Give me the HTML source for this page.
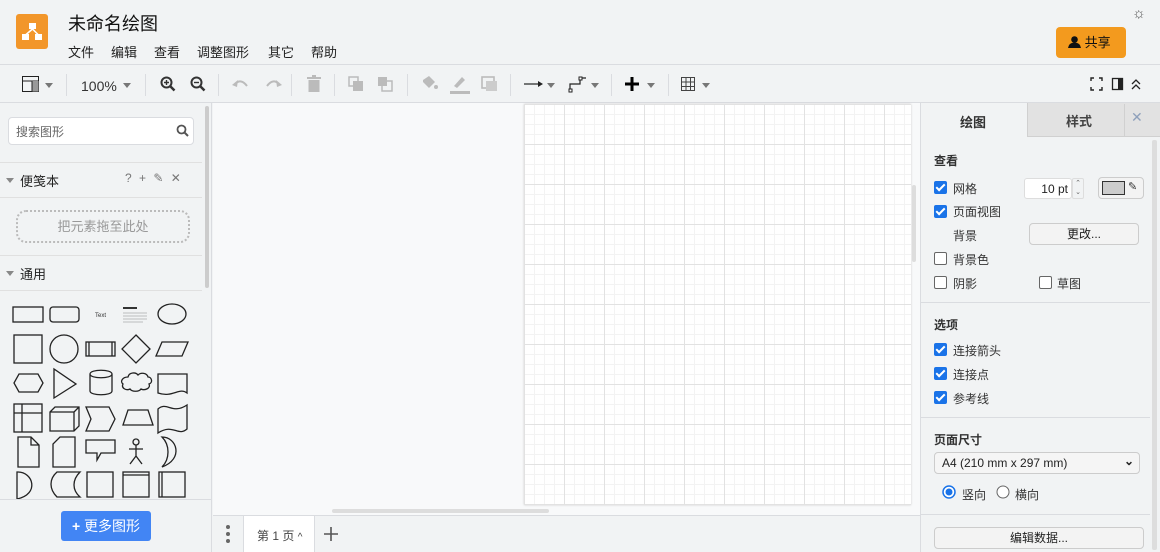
<!DOCTYPE html>
<html><head><meta charset="utf-8"><style>
*{box-sizing:border-box;margin:0;padding:0}
body{width:1160px;height:552px;overflow:hidden;background:#f1f3f4;font-family:"Liberation Sans","Noto Sans CJK SC",sans-serif;color:#222;position:relative;font-size:13px}
.abs{position:absolute}
.menu span{position:absolute;top:0;font-size:13px;white-space:nowrap}
.tb{top:64px;left:0;width:1160px;height:39px;border-top:1px solid #dadce0;border-bottom:1px solid #dadce0;background:#f1f3f4}
.sep{position:absolute;top:9px;width:1px;height:22px;background:#dadce0}
.caret{display:inline-block;border-left:4px solid transparent;border-right:4px solid transparent;border-top:5px solid #777}
.cb{position:absolute;width:13px;height:13px;border-radius:2px}
.cb.on{background:#1a73e8}
.cb.on:after{content:"";position:absolute;left:4px;top:1px;width:3px;height:7px;border:solid #fff;border-width:0 2px 2px 0;transform:rotate(45deg)}
.cb.off{border:1px solid #666;background:#fff}
.lbl{position:absolute;font-size:12px;color:#333}
.btn{position:absolute;border:1px solid #ccc;border-radius:4px;background:#f3f3f3;font-size:12px;text-align:center}
</style></head><body>
<!-- header -->
<div class="abs" style="left:16px;top:14px;width:32px;height:35px;background:#f2962a;border-radius:3px"></div>
<svg class="abs" style="left:16px;top:14px" width="32" height="35"><g fill="#fff"><rect x="13" y="9" width="7" height="6"/><rect x="6" y="20" width="7" height="6"/><rect x="19" y="20" width="7" height="6"/></g><path d="M16.5 15 L9.5 21 M16.5 15 L22.5 21" stroke="#fff" stroke-width="1.5"/></svg>
<div class="abs" style="left:68px;top:10px;font-size:18px;color:#111">未命名绘图</div>
<div class="abs menu" style="left:0;top:42px"><span style="left:68px">文件</span><span style="left:111px">编辑</span><span style="left:154px">查看</span><span style="left:197px">调整图形</span><span style="left:268px">其它</span><span style="left:311px">帮助</span></div>
<div class="abs" style="left:1132px;top:5px;font-size:15px;color:#555">☼</div>
<div class="abs" style="left:1056px;top:27px;width:70px;height:31px;background:#f39a1e;border-radius:4px;color:#111;font-size:13px;line-height:31px;padding-left:12px">
<svg width="13" height="12" style="vertical-align:-1px"><circle cx="6.5" cy="3.5" r="3.3" fill="#111"/><path d="M0 12 Q1 6.5 6.5 6.5 Q12 6.5 13 12Z" fill="#111"/></svg> 共享</div>
<!-- toolbar -->
<div class="abs tb">
<svg class="abs" style="left:22px;top:11px" width="18" height="16"><rect x=".5" y=".5" width="16" height="15" fill="none" stroke="#222"/><line x1="0" y1="5" x2="17" y2="5" stroke="#222"/><rect x="10" y="5" width="6.5" height="10.5" fill="#999"/><line x1="10" y1="5" x2="10" y2="16" stroke="#222"/></svg>
<span class="caret abs" style="left:45px;top:18px"></span>
<div class="sep" style="left:66px"></div>
<div class="abs" style="left:81px;top:13px;font-size:14px;color:#333">100%</div><span class="caret abs" style="left:123px;top:18px"></span>
<div class="sep" style="left:145px"></div>
<svg class="abs" style="left:160px;top:11px" width="16" height="16"><circle cx="6.5" cy="6.5" r="5" fill="none" stroke="#333" stroke-width="2"/><path d="M10 10 L14.5 14.5" stroke="#333" stroke-width="2.5"/><path d="M4 6.5h5M6.5 4v5" stroke="#333" stroke-width="1.4"/></svg>
<svg class="abs" style="left:190px;top:11px" width="16" height="16"><circle cx="6.5" cy="6.5" r="5" fill="none" stroke="#333" stroke-width="2"/><path d="M10 10 L14.5 14.5" stroke="#333" stroke-width="2.5"/><path d="M4 6.5h5" stroke="#333" stroke-width="1.4"/></svg>
<div class="sep" style="left:218px"></div>
<svg class="abs" style="left:232px;top:13px" width="50" height="12"><path d="M3 6 Q9 0 15 8" stroke="#bbb" stroke-width="2" fill="none"/><path d="M0 7 L6 2 L5 9Z" fill="#bbb"/><path d="M47 6 Q41 0 35 8" stroke="#bbb" stroke-width="2" fill="none"/><path d="M50 7 L44 2 L45 9Z" fill="#bbb"/></svg>
<div class="sep" style="left:291px"></div>
<svg class="abs" style="left:307px;top:10px" width="14" height="17"><rect x="0" y="2" width="14" height="2" fill="#bbb"/><rect x="5" y="0" width="4" height="2" fill="#bbb"/><rect x="1.5" y="5" width="11" height="12" fill="#bbb"/></svg>
<div class="sep" style="left:334px"></div>
<svg class="abs" style="left:348px;top:11px" width="50" height="16"><rect x="1" y="1" width="9" height="9" fill="none" stroke="#bbb" stroke-width="1.5"/><rect x="5" y="5" width="10" height="10" fill="#bbb"/><rect x="30" y="1" width="9" height="9" fill="#bbb"/><rect x="34" y="5" width="10" height="10" fill="none" stroke="#bbb" stroke-width="1.5"/></svg>
<div class="sep" style="left:407px"></div>
<svg class="abs" style="left:420px;top:9px" width="80" height="20"><path d="M3 6 L9 2 L15 8 L9 14 L3 8Z" fill="#bbb"/><circle cx="16" cy="13" r="2" fill="#bbb"/><path d="M34 12 L42 3 L45 6 L37 14Z" fill="#bbb"/><rect x="30" y="17" width="20" height="3" fill="#bbb"/><rect x="62" y="3" width="12" height="11" fill="none" stroke="#bbb" stroke-width="1.6"/><rect x="66" y="7" width="11" height="10" fill="#ccc"/></svg>
<div class="sep" style="left:510px"></div>
<svg class="abs" style="left:524px;top:14px" width="20" height="10"><path d="M0 5h16" stroke="#222" stroke-width="1.2"/><path d="M14 2 L19 5 L14 8Z" fill="#222"/></svg><span class="caret abs" style="left:547px;top:18px"></span>
<svg class="abs" style="left:568px;top:11px" width="20" height="17"><path d="M2 14 V8 H12 V2 H18" stroke="#222" fill="none" stroke-width="1.2"/><rect x="1" y="13" width="3" height="3" fill="#fff" stroke="#222"/><rect x="11" y="1" width="3" height="3" fill="#fff" stroke="#222"/></svg><span class="caret abs" style="left:591px;top:18px"></span>
<div class="sep" style="left:611px"></div>
<svg class="abs" style="left:625px;top:12px" width="14" height="14"><path d="M7 0v14M0 7h14" stroke="#000" stroke-width="3"/></svg><span class="caret abs" style="left:647px;top:18px"></span>
<div class="sep" style="left:668px"></div>
<svg class="abs" style="left:681px;top:12px" width="14" height="14"><path d="M.5 .5h13v13h-13zM.5 5h13M.5 9.5h13M5 .5v13M9.5 .5v13" stroke="#444" fill="none"/></svg><span class="caret abs" style="left:702px;top:18px"></span>
<svg class="abs" style="left:1090px;top:12px" width="56" height="14"><path d="M1 4V1h3M9 1h3v3M12 10v3H9M4 13H1v-3" stroke="#222" fill="none" stroke-width="1.4"/><rect x="22.5" y="1.5" width="10" height="11" fill="none" stroke="#222" stroke-width="1.3"/><rect x="28" y="2" width="4" height="10" fill="#222"/><path d="M42 7l4-4 4 4M42 12l4-4 4 4" stroke="#222" fill="none" stroke-width="1.3"/></svg>
</div>
<!-- left panel -->
<div class="abs" style="left:0;top:103px;width:212px;height:449px;background:#f1f3f4;border-right:1px solid #dadce0"></div>
<div class="abs" style="left:205px;top:106px;width:4px;height:182px;background:#ccc;border-radius:2px"></div>
<div class="abs" style="left:8px;top:117px;width:186px;height:28px;background:#fff;border:1px solid #dadce0;border-radius:4px;font-size:12px;color:#666;padding:5px 7px">搜索图形</div>
<svg class="abs" style="left:176px;top:124px" width="13" height="13"><circle cx="5.5" cy="5.5" r="4" fill="none" stroke="#555" stroke-width="1.8"/><path d="M8.5 8.5L12 12" stroke="#555" stroke-width="2"/></svg>
<div class="abs" style="left:0;top:162px;width:202px;height:1px;background:#e0e0e0"></div>
<span class="abs caret" style="left:6px;top:178px;border-top-color:#888"></span>
<div class="abs" style="left:20px;top:171px;font-size:13px">便笺本</div>
<div class="abs" style="left:125px;top:171px;font-size:12px;color:#777;letter-spacing:2px">? + ✎ ✕</div>
<div class="abs" style="left:0;top:197px;width:202px;height:1px;background:#e0e0e0"></div>
<div class="abs" style="left:16px;top:210px;width:174px;height:33px;border:2px dotted #bbb;border-radius:10px;text-align:center;line-height:29px;color:#999;font-size:13px">把元素拖至此处</div>
<div class="abs" style="left:0;top:255px;width:202px;height:1px;background:#e0e0e0"></div>
<span class="abs caret" style="left:6px;top:271px;border-top-color:#888"></span>
<div class="abs" style="left:20px;top:264px;font-size:13px">通用</div>
<div class="abs" style="left:0;top:290px;width:202px;height:1px;background:#e0e0e0"></div>
<svg class="abs" style="left:0;top:291px" width="205" height="209" fill="none" stroke="#222" stroke-width="1.3">
<rect x="13" y="16" width="30" height="15"/><rect x="50" y="16" width="29" height="15" rx="3"/>
<text x="95" y="26" font-size="6" fill="#333" stroke="none" font-family="Liberation Sans">Text</text>
<g stroke="#888" stroke-width=".6"><path d="M123 22h24M123 25h24M123 28h24M123 31h20"/></g><rect x="123" y="16" width="14" height="2" fill="#333" stroke="none"/>
<ellipse cx="172" cy="23" rx="14" ry="10"/>
<rect x="14" y="44" width="28" height="28"/><circle cx="64" cy="58" r="14"/><rect x="86" y="51" width="29" height="14"/><path d="M89 51v14M112 51v14"/>
<path d="M136 44l14 14-14 14-14-14z"/><path d="M162 51h26l-6 14h-26z"/>
<path d="M14 92l5-9h19l5 9-5 9h-19z"/><path d="M54 78v29l22-14z"/><path d="M90 83v17c0 5 22 5 22 0V83c0-5-22-5-22 0c0 5 22 5 22 0"/>
<path d="M128 86c1-5 8-5 10-2c3-3 9-2 10 2c4 0 5 6 1 7c2 4-4 7-8 5c-2 3-9 3-11 0c-4 2-9-1-7-5c-3-2-1-7 5-7z"/><path d="M158 83h29v19c-8-6-14 5-29 0z"/>
<rect x="14" y="113" width="28" height="28"/><path d="M14 122h28M22 113v28"/><path d="M50 121l5-5h24v19l-5 5h-24z M50 121h24v19M74 121l5-5"/><path d="M86 116h23l6 12-6 12h-23l5-12z"/><path d="M128 119h20l5 15h-30z"/><path d="M158 118c9-8 14 6 29-4v24c-9 8-14-6-29 4z"/>
<path d="M18 146h13l8 8v22h-21z M31 146v8h8"/><path d="M60 146h15v30h-22v-23z"/><path d="M86 149h29v13h-14l-4 7v-7h-11z"/><circle cx="136" cy="151" r="3"/><path d="M136 154v11M129 158h14M136 165l-6 8M136 165l6 8"/><path d="M162 146c15 0 22 22 0 30c8-8 8-22 0-30z"/>
<path d="M18 181c15 0 22 22-1 27v-27z"/><path d="M57 181h23c-8 8-8 18 0 25h-23c-8-8-8-18 0-25z"/><rect x="87" y="181" width="26" height="25"/><rect x="123" y="181" width="26" height="25"/><path d="M123 184h26"/><rect x="159" y="181" width="26" height="25"/><path d="M162 181v25"/>
</svg>
<div class="abs" style="left:0;top:499px;width:212px;height:1px;background:#dadce0"></div>
<div class="abs" style="left:61px;top:511px;width:90px;height:30px;background:#4285f4;border-radius:3px;color:#fff;font-size:14px;text-align:center;line-height:30px"><b>+</b> 更多图形</div>
<!-- canvas -->
<div class="abs" style="left:213px;top:103px;width:707px;height:412px;background:#f8f9fa"></div>
<div class="abs" style="left:524px;top:104px;width:387px;height:401px;background-color:#fff;background-image:linear-gradient(#e2e2e2 1px,transparent 1px),linear-gradient(90deg,#e2e2e2 1px,transparent 1px),linear-gradient(#f3f3f3 1px,transparent 1px),linear-gradient(90deg,#f3f3f3 1px,transparent 1px);background-size:40px 40px,40px 40px,10px 10px,10px 10px;background-position:0 0;box-shadow:0 0 2px #ccc"></div>
<div class="abs" style="left:912px;top:185px;width:4px;height:77px;background:#ddd;border-radius:2px"></div>
<div class="abs" style="left:332px;top:509px;width:217px;height:4px;background:#ddd;border-radius:2px"></div>
<!-- bottom tabs -->
<div class="abs" style="left:213px;top:515px;width:707px;height:37px;background:#f1f3f4;border-top:1px solid #dadce0"></div>
<svg class="abs" style="left:224px;top:524px" width="8" height="20" fill="#666"><circle cx="4" cy="3" r="2"/><circle cx="4" cy="10" r="2"/><circle cx="4" cy="17" r="2"/></svg>
<div class="abs" style="left:243px;top:516px;width:72px;height:36px;background:#fff;border-left:1px solid #dadce0;border-right:1px solid #dadce0;font-size:12px;color:#444;padding:11px 0 0 13px">第 1 页 <span style="font-size:10px">^</span></div>
<svg class="abs" style="left:323px;top:526px" width="16" height="16"><path d="M8 1v14M1 8h14" stroke="#555" stroke-width="1.6"/></svg>
<!-- right panel -->
<div class="abs" style="left:920px;top:103px;width:240px;height:449px;background:#f1f3f4;border-left:1px solid #dadce0"></div>
<div class="abs" style="left:1027px;top:103px;width:133px;height:34px;background:#e2e2e2;border-left:1px solid #d0d0d0;border-bottom:1px solid #d0d0d0"></div>
<div class="abs" style="left:960px;top:112px;font-size:13px;font-weight:bold;color:#333">绘图</div>
<div class="abs" style="left:1066px;top:111px;font-size:13px;font-weight:bold;color:#444">样式</div>
<div class="abs" style="left:1124px;top:104px;width:36px;height:32px;border-left:1px solid #d0d0d0"></div>
<div class="abs" style="left:1131px;top:109px;font-size:14px;color:#8ea0bb">✕</div>
<div class="abs" style="left:1152px;top:140px;width:5px;height:410px;background:#ddd;border-radius:2px"></div>
<div class="abs" style="left:934px;top:152px;font-size:12px;font-weight:bold;color:#333">查看</div>
<div class="cb on" style="left:934px;top:181px"></div><div class="lbl" style="left:953px;top:180px">网格</div>
<div class="abs" style="left:1024px;top:178px;width:48px;height:21px;background:#fff;border:1px solid #ddd;border-radius:3px;font-size:12px;text-align:right;padding:3px 3px 0 0">10 pt</div>
<div class="abs" style="left:1072px;top:178px;width:12px;height:21px;border:1px solid #ddd;border-radius:2px;font-size:7px;color:#666;text-align:center;line-height:9px">⌃<br>⌄</div>
<div class="btn" style="left:1098px;top:177px;width:46px;height:22px"></div>
<div class="abs" style="left:1102px;top:181px;width:23px;height:14px;background:#ccc;border:1px solid #333"></div>
<div class="abs" style="left:1128px;top:180px;font-size:11px;color:#333">✎</div>
<div class="cb on" style="left:934px;top:205px"></div><div class="lbl" style="left:953px;top:203px">页面视图</div>
<div class="lbl" style="left:953px;top:227px">背景</div>
<div class="btn" style="left:1029px;top:223px;width:110px;height:22px;line-height:20px">更改...</div>
<div class="cb off" style="left:934px;top:252px"></div><div class="lbl" style="left:953px;top:251px">背景色</div>
<div class="cb off" style="left:934px;top:276px"></div><div class="lbl" style="left:953px;top:275px">阴影</div>
<div class="cb off" style="left:1039px;top:276px"></div><div class="lbl" style="left:1057px;top:275px">草图</div>
<div class="abs" style="left:920px;top:302px;width:230px;height:1px;background:#dadce0"></div>
<div class="abs" style="left:934px;top:316px;font-size:12px;font-weight:bold;color:#333">选项</div>
<div class="cb on" style="left:934px;top:343px"></div><div class="lbl" style="left:953px;top:342px">连接箭头</div>
<div class="cb on" style="left:934px;top:367px"></div><div class="lbl" style="left:953px;top:366px">连接点</div>
<div class="cb on" style="left:934px;top:391px"></div><div class="lbl" style="left:953px;top:390px">参考线</div>
<div class="abs" style="left:920px;top:417px;width:230px;height:1px;background:#dadce0"></div>
<div class="abs" style="left:934px;top:431px;font-size:12px;font-weight:bold;color:#333">页面尺寸</div>
<div class="btn" style="left:934px;top:452px;width:206px;height:22px;text-align:left;padding:3px 0 0 7px;background:#f5f5f5;color:#222">A4 (210 mm x 297 mm)<span style="position:absolute;right:5px;top:1px;font-weight:bold">⌄</span></div>
<svg class="abs" style="left:942px;top:485px" width="14" height="14"><circle cx="7" cy="7" r="6" fill="#fff" stroke="#1a73e8" stroke-width="1.5"/><circle cx="7" cy="7" r="3.5" fill="#1a73e8"/></svg>
<div class="lbl" style="left:962px;top:486px">竖向</div>
<svg class="abs" style="left:996px;top:485px" width="14" height="14"><circle cx="7" cy="7" r="6" fill="#fff" stroke="#666"/></svg>
<div class="lbl" style="left:1015px;top:486px">横向</div>
<div class="abs" style="left:920px;top:514px;width:230px;height:1px;background:#dadce0"></div>
<div class="btn" style="left:934px;top:527px;width:210px;height:22px;line-height:20px">编辑数据...</div>
</body></html>
